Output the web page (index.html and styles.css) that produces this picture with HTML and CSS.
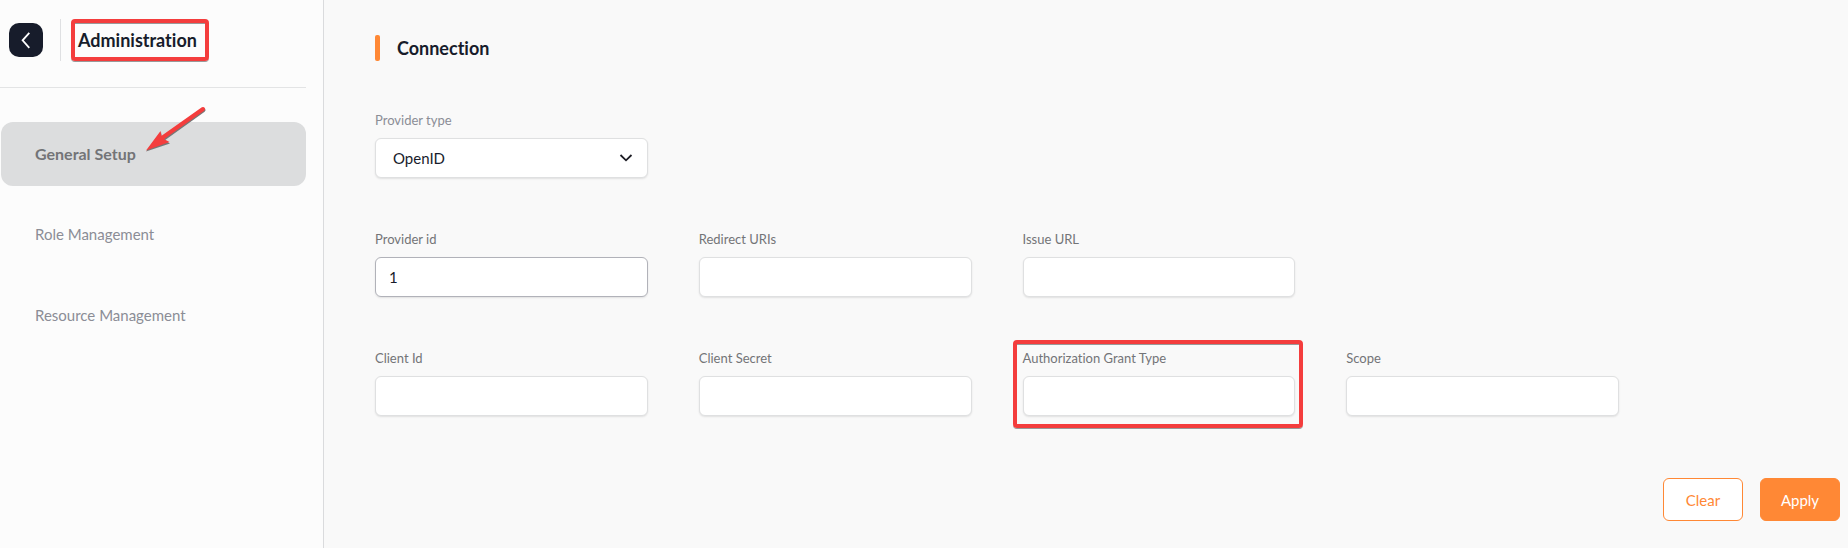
FILE: index.html
```html
<!DOCTYPE html>
<html lang="en">
<head>
<meta charset="utf-8">
<title>Administration</title>
<link rel="stylesheet" href="styles.css">
</head>
<body>
<div class="app">
  <aside class="sidebar">
    <header class="sidebar-head">
      <button class="back" type="button" aria-label="Back">
        <svg width="34" height="34" viewBox="0 0 34 34" fill="none" stroke="#fff" stroke-width="1.8"><path d="M20.3 9.8 L13.6 17.3 L20.3 24.8"/></svg>
      </button>
      <h1 class="sidebar-title marked">Administration</h1>
    </header>
    <nav class="nav">
      <a class="nav-item active" href="#">General Setup
        <svg class="arrow" width="62" height="48" viewBox="0 0 62 48" aria-hidden="true">
          <path d="M58.5 4 L18 33" stroke="#777" stroke-width="4" stroke-linecap="round"/>
          <path d="M1 45.500 L16 26 L17 33 L25 37.5 Z" fill="#777"/>
          <path d="M58 3 L17 32" stroke="#f43d3d" stroke-width="4" stroke-linecap="round"/>
          <path d="M1 44.500 L15.5 25 L17 32 L24.500 36 Z" fill="#f43d3d"/>
        </svg>
      </a>
      <a class="nav-item" href="#">Role Management</a>
      <a class="nav-item" href="#">Resource Management</a>
    </nav>
  </aside>
  <main class="main">
    <h2 class="section-title">Connection</h2>
    <form class="form">
      <div class="fields">
        <div class="field field-first">
          <label class="label label-light" for="type">Provider type</label>
          <div class="select-wrap">
            <select class="control select" id="type"><option>OpenID</option></select>
            <svg class="chevron" width="14" height="10" viewBox="0 0 14 10" fill="none" stroke="#1d1d25" stroke-width="1.8"><path d="M1.500 2 L7 7.300 L12.500 2"/></svg>
          </div>
        </div>
        <div class="field field-first"><label class="label" for="pid">Provider id</label><input class="control filled" id="pid" type="text" value="1"></div>
        <div class="field"><label class="label" for="uris">Redirect URIs</label><input class="control" id="uris" type="text"></div>
        <div class="field"><label class="label" for="issue">Issue URL</label><input class="control" id="issue" type="text"></div>
        <div class="field field-first"><label class="label" for="cid">Client Id</label><input class="control" id="cid" type="text"></div>
        <div class="field"><label class="label" for="secret">Client Secret</label><input class="control" id="secret" type="text"></div>
        <div class="field field-marked"><label class="label" for="grant">Authorization Grant Type</label><input class="control" id="grant" type="text"></div>
        <div class="field"><label class="label" for="scope">Scope</label><input class="control" id="scope" type="text"></div>
      </div>
      <div class="actions">
        <button class="btn btn-outline" type="reset">Clear</button>
        <button class="btn btn-solid" type="button">Apply</button>
      </div>
    </form>
  </main>
</div>
</body>
</html>
```

FILE: styles.css
```css
* { box-sizing: border-box; }
body {
  margin: 0;
  background: #f9f9f9;
  color: #171c2b;
  font-family: Lato, "Open Sans", sans-serif;
  font-variant-ligatures: none;
}
.app { display: flex; min-height: 100vh; }
.sidebar {
  flex: none;
  width: 324px;
  padding-right: 17px;
  background: #fcfcfc;
  border-right: 1px solid #dadbdd;
}
.sidebar-head {
  display: flex;
  align-items: center;
  height: 88px;
  padding: 0 0 8px 9px;
  border-bottom: 1px solid #e3e4e5;
}
.back {
  width: 34px;
  height: 34px;
  padding: 0;
  border: 0;
  border-radius: 10px;
  background: #171c2b;
}
.back svg { display: block; }
.sidebar-head::after { content: ""; order: 1; width: 1px; height: 42px; margin-left: 17px; background: #dfe0e2; }
.sidebar-title { order: 2; margin: 0 0 0 10px; font-size: 18px; line-height: 34px; font-weight: 700; }
.marked {
  width: 138px;
  padding-left: 3px;
  border: 4px solid #f43d3d;
  border-radius: 4px;
  box-shadow: 0 1px 0 #999, inset 0 1px 0 #999;
}
.nav { display: flex; flex-direction: column; gap: 17px; padding: 34px 0 0 1px; }
.nav-item {
  position: relative;
  display: flex;
  align-items: center;
  height: 64px;
  padding: 0 0 2px 34px;
  border-radius: 12px;
  color: #8b8d96;
  font-size: 15px;
  text-decoration: none;
}
.active { background: #dcddde; color: #737477; font-size: 16px; font-weight: 700; }
.arrow { position: absolute; left: 144px; top: -16px; }
.main {
  flex: 1;
  min-width: 0;
  padding: 35px 8px 27px 51px;
}
.section-title {
  display: flex;
  align-items: center;
  gap: 17px;
  margin: 0;
  font-size: 18px;
  line-height: 26px;
  font-weight: 700;
}
.section-title::before { content: ""; width: 5px; height: 26px; border-radius: 2px; background: #ff8835; }
.fields {
  display: grid;
  grid-template-columns: repeat(4, minmax(0, 1fr));
  gap: 51px;
  padding: 49px 221px 0 0;
}
.field { position: relative; display: flex; flex-direction: column; gap: 8px; }
.field-first { grid-column-start: 1; }
.label { color: #737477; font-size: 13px; line-height: 20px; }
.label-light { color: #8b8d96; }
.control {
  width: 100%;
  height: 40px;
  padding: 0 13px;
  border: 1px solid #dfe0e1;
  border-radius: 6px;
  background: #fff;
  box-shadow: 0 1px 2px #0000001a;
  color: #171c2b;
  font-family: inherit;
  font-size: 15px;
}
.filled { border-color: #b1b2b9; }
.select-wrap { display: grid; align-items: center; }
.select-wrap > * { grid-area: 1 / 1; }
.select { appearance: none; padding: 0 17px; }
.chevron { justify-self: end; margin-right: 15px; pointer-events: none; }
.field-marked::after {
  content: "";
  position: absolute;
  inset: -8px -8px -12px -10px;
  border: 4px solid #f43d3d;
  border-radius: 4px;
  box-shadow: 0 1px 0 #999, inset 0 1px 0 #999;
  pointer-events: none;
}
.actions { display: flex; justify-content: flex-end; gap: 17px; padding-top: 62px; }
.btn {
  width: 80px;
  height: 43px;
  padding: 0;
  border: 1px solid #ff8835;
  border-radius: 6px;
  font-family: inherit;
  font-size: 15px;
}
.btn-outline { background: #fff; color: #ff8835; }
.btn-solid { background: #ff8835; color: #fff; }
```
